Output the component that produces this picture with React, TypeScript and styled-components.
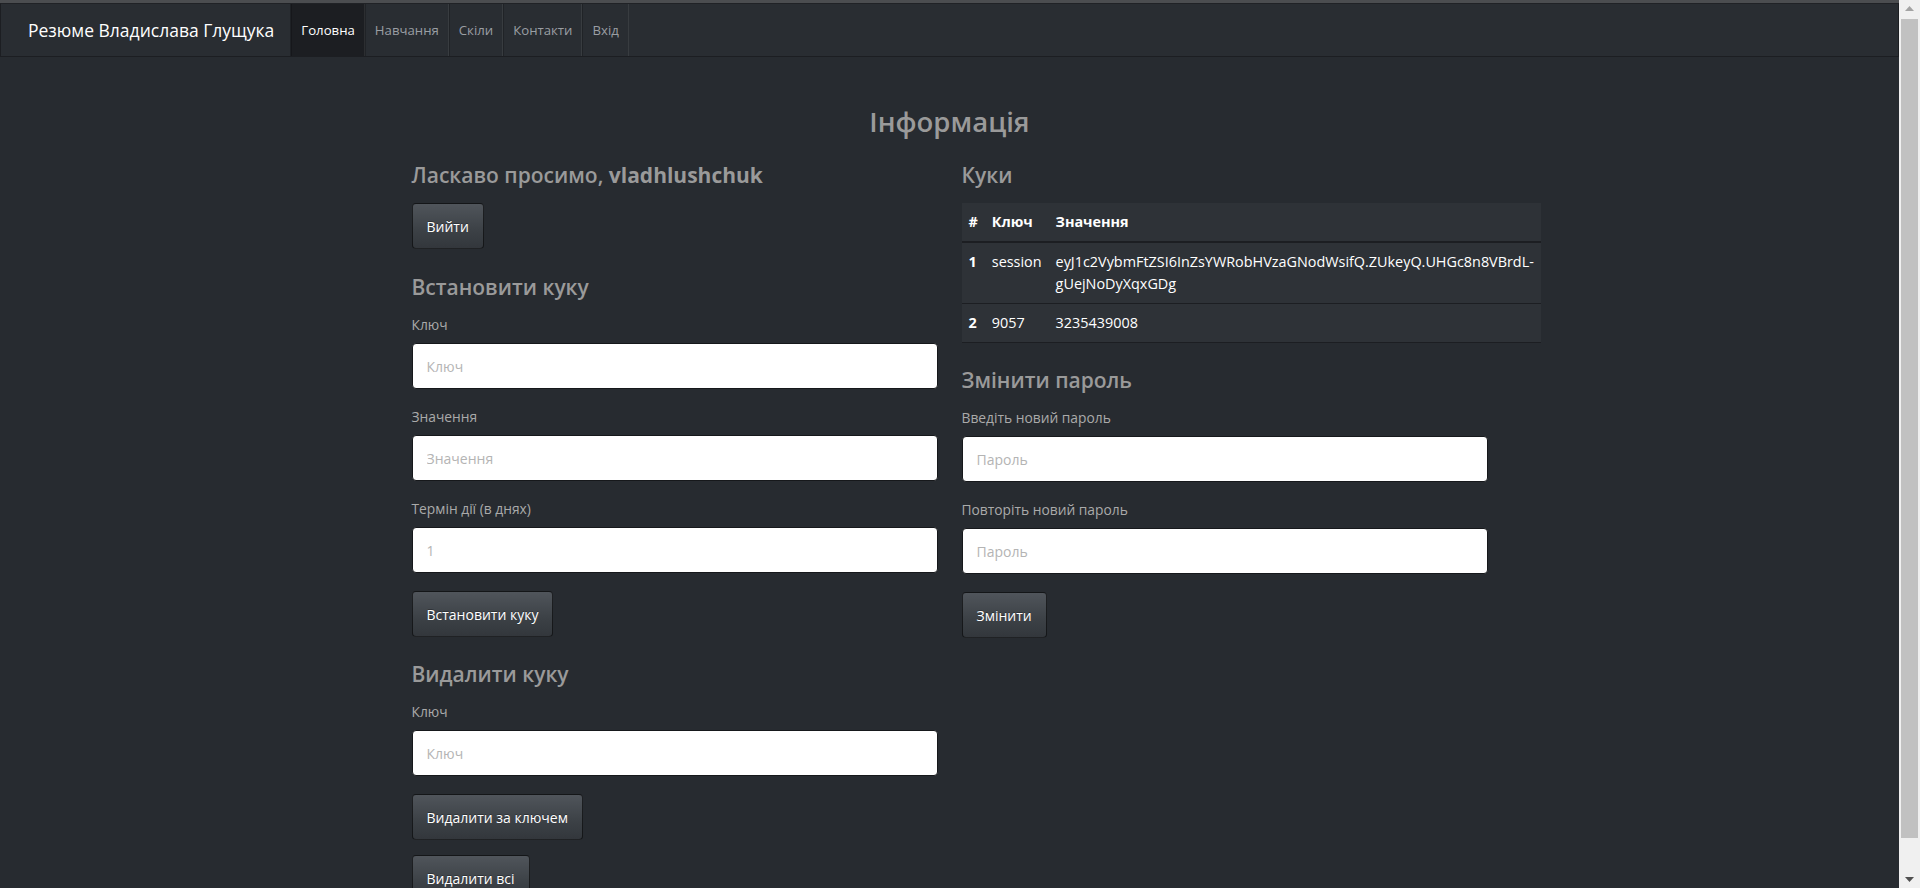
import React from "react";
import styled, { createGlobalStyle } from "styled-components";

const GlobalStyle = createGlobalStyle`
  html, body {
    margin: 0;
    padding: 0;
    height: 100%;
    overflow: hidden;
    background-color: #272b30;
  }

  * {
    box-sizing: border-box;
  }
`;

const Screen = styled.div`
  display: flex;
  width: 100vw;
  height: 100vh;
  overflow: hidden;

  font-family: "Open Sans", "Noto Sans", sans-serif;
  color: #c8c8c8;
  background-color: #272b30;
`;

const Page = styled.div`
  flex: 1;
  display: flex;
  flex-direction: column;
  min-width: 0;
  overflow: hidden;

  border-top: 3px solid #4b4d50;
`;

const Navbar = styled.nav`
  display: flex;
  align-items: stretch;
  flex-shrink: 0;
  height: 54px;

  background-color: #292d32;
  border: 1px solid #1c1e22;
  border-top-color: #202226;
`;

const Brand = styled.a`
  display: flex;
  align-items: center;
  padding: 0 16px 0 27px;

  color: #ffffff;
  font-size: 17.5px;
  text-decoration: none;
`;

const NavList = styled.ul`
  display: flex;
  margin: 0;
  padding: 0;
  list-style: none;
  border-left: 1px solid rgba(0, 0, 0, 0.25);
`;

const NavItem = styled.li<{ $active?: boolean }>`
  display: flex;
  align-items: center;
  padding: 0 9px;

  font-size: 13.2px;
  color: ${(p) => (p.$active ? "#ffffff" : "#9a9ea3")};
  background-color: ${(p) => (p.$active ? "#1c1e22" : "transparent")};
  border-right: 1px solid rgba(255, 255, 255, 0.07);
  border-left: 1px solid rgba(0, 0, 0, 0.2);
  cursor: pointer;
`;

const Content = styled.main`
  display: flex;
  flex-direction: column;
  align-items: center;
  flex-shrink: 0;
`;

const Title = styled.h1`
  margin: 49px 0 0;

  font-size: 27.5px;
  font-weight: 600;
  line-height: 32px;
  color: #9a9a9a;
`;

const Columns = styled.div`
  display: grid;
  grid-template-columns: 526px 526px;
  column-gap: 24px;
`;

const Column = styled.section`
  display: flex;
  flex-direction: column;
  align-items: flex-start;
  min-width: 0;
`;

const Heading = styled.h3<{ $top?: number }>`
  margin: ${(p) => p.$top ?? 24}px 0 15px;

  font-size: 21px;
  font-weight: 600;
  line-height: 26px;
  color: #9a9a9a;

  b {
    font-weight: 700;
  }
`;

const Field = styled.div`
  display: flex;
  flex-direction: column;
  width: 100%;
  margin-bottom: 18px;
`;

const Label = styled.label`
  margin-bottom: 8px;

  font-size: 13.8px;
  line-height: 20px;
  color: #aaaaaa;
`;

const Input = styled.input`
  width: 100%;
  height: 46px;
  padding: 0 14px;

  font-family: inherit;
  font-size: 14px;
  color: #272b30;
  background-color: #ffffff;
  border: 1px solid #16181b;
  border-radius: 4px;
  outline: none;

  &::placeholder {
    color: #b4b4b4;
  }
`;

const Button = styled.button<{ $gap?: number }>`
  height: 46px;
  padding: 0 14px;
  margin-bottom: ${(p) => p.$gap ?? 0}px;

  font-family: inherit;
  font-size: 14px;
  color: #ffffff;
  text-shadow: 0 -1px 0 rgba(0, 0, 0, 0.3);
  background-image: linear-gradient(#50555b, #3c4146 60%, #33373c);
  border: 1px solid rgba(0, 0, 0, 0.6);
  border-radius: 4px;
  cursor: pointer;
`;

const CookieTable = styled.table`
  width: 100%;
  border-collapse: collapse;

  font-size: 14.4px;
  line-height: 22px;
  color: #ffffff;
  background-color: #2e3237;

  th,
  td {
    padding: 8px 7px;
    text-align: left;
    vertical-align: top;
    border-bottom: 1px solid #1c1e22;
  }

  th {
    font-weight: 700;
    border-bottom-width: 2px;
  }

  td:first-child {
    font-weight: 700;
  }
`;

const Scrollbar = styled.div`
  display: flex;
  flex-direction: column;
  align-items: center;
  width: 21px;
  flex-shrink: 0;

  background-color: #f0f0f0;
`;

const ScrollArrow = styled.div`
  display: flex;
  align-items: center;
  justify-content: center;
  height: 17px;
  width: 100%;
`;

const ScrollThumb = styled.div`
  flex: 1;
  width: 17px;
  margin: 2px 0 33px;

  background-color: #c1c1c1;
`;

const cookies = [
  {
    key: "session",
    value:
      "eyJ1c2VybmFtZSI6InZsYWRobHVzaGNodWsifQ.ZUkeyQ.UHGc8n8VBrdL-gUejNoDyXqxGDg",
  },
  { key: "9057", value: "3235439008" },
];

const navItems = ["Головна", "Навчання", "Скіли", "Контакти", "Вхід"];

export default function App() {
  return (
    <>
      <GlobalStyle />
      <Screen>
        <Page>
          <Navbar>
            <Brand href="#">Резюме Владислава Глущука</Brand>
            <NavList>
              {navItems.map((item, idx) => (
                <NavItem key={item} $active={idx === 0}>
                  {item}
                </NavItem>
              ))}
            </NavList>
          </Navbar>

          <Content>
            <Title>Інформація</Title>
            <Columns>
              <Column>
                <Heading>
                  Ласкаво просимо, <b>vladhlushchuk</b>
                </Heading>
                <Button>Вийти</Button>

                <Heading $top={25}>Встановити куку</Heading>
                <Field>
                  <Label>Ключ</Label>
                  <Input placeholder="Ключ" />
                </Field>
                <Field>
                  <Label>Значення</Label>
                  <Input placeholder="Значення" />
                </Field>
                <Field>
                  <Label>Термін дії (в днях)</Label>
                  <Input placeholder="1" />
                </Field>
                <Button>Встановити куку</Button>

                <Heading>Видалити куку</Heading>
                <Field>
                  <Label>Ключ</Label>
                  <Input placeholder="Ключ" />
                </Field>
                <Button $gap={15}>Видалити за ключем</Button>
                <Button>Видалити всі</Button>
              </Column>

              <Column>
                <Heading>Куки</Heading>
                <CookieTable>
                  <thead>
                    <tr>
                      <th>#</th>
                      <th>Ключ</th>
                      <th>Значення</th>
                    </tr>
                  </thead>
                  <tbody>
                    {cookies.map((c, idx) => (
                      <tr key={c.key}>
                        <td>{idx + 1}</td>
                        <td>{c.key}</td>
                        <td>{c.value}</td>
                      </tr>
                    ))}
                  </tbody>
                </CookieTable>

                <Heading $top={24}>Змінити пароль</Heading>
                <Field>
                  <Label>Введіть новий пароль</Label>
                  <Input type="password" placeholder="Пароль" />
                </Field>
                <Field>
                  <Label>Повторіть новий пароль</Label>
                  <Input type="password" placeholder="Пароль" />
                </Field>
                <Button>Змінити</Button>
              </Column>
            </Columns>
          </Content>
        </Page>

        <Scrollbar>
          <ScrollArrow>
            <svg width="9" height="5" viewBox="0 0 9 5">
              <path d="M0 5 L4.5 0 L9 5 Z" fill="#a3a3a3" />
            </svg>
          </ScrollArrow>
          <ScrollThumb />
          <ScrollArrow>
            <svg width="9" height="5" viewBox="0 0 9 5">
              <path d="M0 0 L4.5 5 L9 0 Z" fill="#505050" />
            </svg>
          </ScrollArrow>
        </Scrollbar>
      </Screen>
    </>
  );
}
